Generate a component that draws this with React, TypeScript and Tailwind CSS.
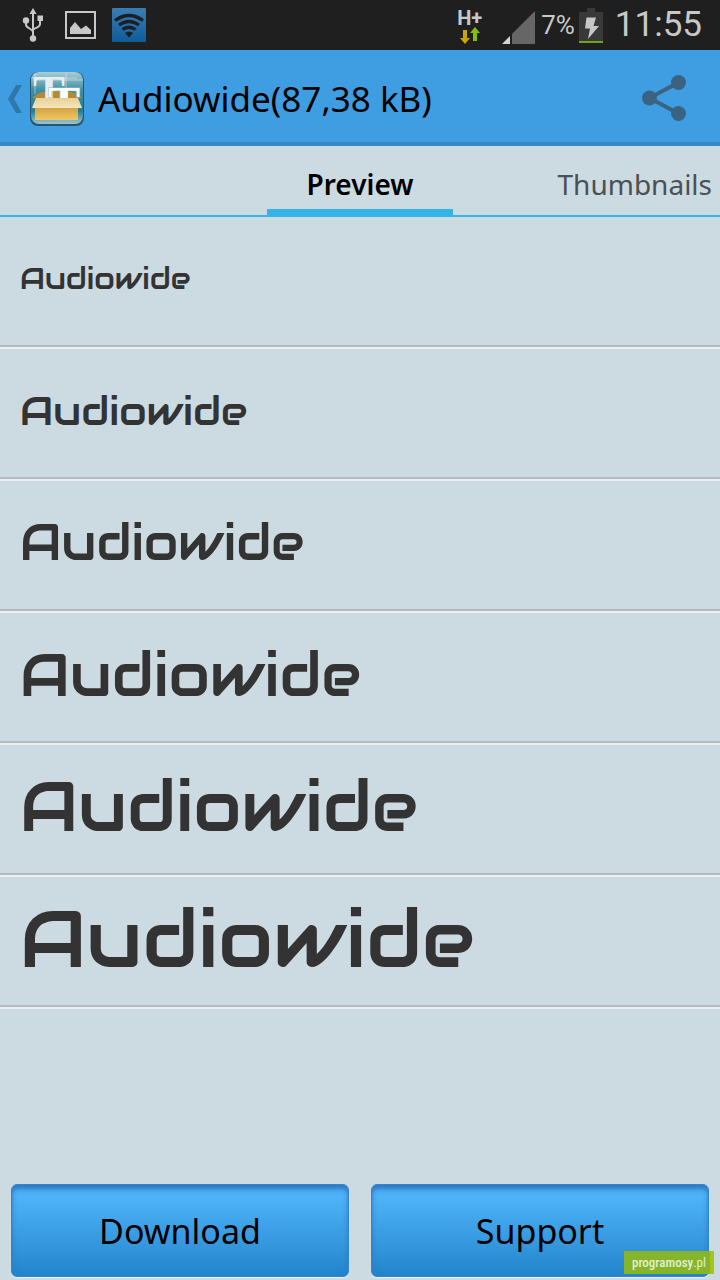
import clsx from 'clsx';

const FONT_NAME = 'Audiowide';

const previewSizes = [
  'text-[30px]',
  'text-[40px]',
  'text-[50px]',
  'text-[60px]',
  'text-[70px]',
  'text-[80px]',
];

function UsbIcon() {
  return (
    <svg width="22" height="36" viewBox="0 0 22 36" fill="none" stroke="#c8c8c8" strokeWidth="2">
      <path d="M11 5v26" />
      <path d="M4 13v5c0 3 7 4 7 7M18 11v6c0 4-7 4-7 6" />
      <path d="M11 1l3.600 6H7.400z" fill="#c8c8c8" stroke="none" />
      <circle cx="4" cy="13.500" r="3.200" fill="#c8c8c8" stroke="none" />
      <path d="M15.500 8.500h5.500v5.500h-5.500z" fill="#c8c8c8" stroke="none" />
      <circle cx="11" cy="31.500" r="3.200" fill="#c8c8c8" stroke="none" />
    </svg>
  );
}

function PictureIcon() {
  return (
    <svg width="32" height="28" viewBox="0 0 32 28">
      <path d="M2 1h29v26H2z" fill="none" stroke="#c8c8c8" strokeWidth="2" />
      <path d="M6 23v-6l5-6 6 7 5-3.500 5 4.500v4z" fill="#c8c8c8" />
    </svg>
  );
}

function WifiIcon() {
  return (
    <svg width="34" height="34" viewBox="0 0 34 34">
      <defs>
        <linearGradient id="wifi" x2="0" y2="1">
          <stop stopColor="#3a7db5" />
          <stop offset="1" stopColor="#0f5c9a" />
        </linearGradient>
      </defs>
      <rect width="34" height="34" rx="1" fill="url(#wifi)" />
      <g fill="none" stroke="#1b1f22" strokeWidth="3.200">
        <path d="M3 12.500q14-10 28 0" />
        <path d="M7 17q10-7 20 0" />
        <path d="M10.500 21.500q6.500-4.500 13 0" />
      </g>
      <path d="M13 25q4-2.600 8 0l-4 4.500z" fill="#1b1f22" />
    </svg>
  );
}

function DataArrows() {
  return (
    <svg width="22" height="17" viewBox="0 0 22 17">
      <path d="M4 3h4v8h3l-5 6-5-6h3z" fill="#cda500" />
      <path d="M14 14h4V6h3l-5-6-5 6h3z" fill="#86bd0c" />
    </svg>
  );
}

function SignalIcon() {
  return (
    <svg width="33" height="33" viewBox="0 0 33 33">
      <path d="M10 23L33 0v33H10z" fill="#666" />
      <path d="M0 33l8-8v8z" fill="#d5d5d5" />
    </svg>
  );
}

function BatteryIcon() {
  return (
    <svg width="24" height="35" viewBox="0 0 24 35">
      <path d="M8 0h8v4h8v31H0V4h8z" fill="#393939" />
      <path d="M0 33h24v2H0z" fill="#6fa516" />
      <path d="M7.500 9.500h9.500l-2.500 8.500h5.500L9 31l2-10.500H6z" fill="#c8c8c8" />
    </svg>
  );
}

function AppIcon() {
  return (
    <svg width="54" height="54" viewBox="0 0 54 54">
      <defs>
        <linearGradient id="tile" x2="0" y2="1">
          <stop stopColor="#a8cdd6" />
          <stop offset="0.350" stopColor="#3f8fa3" />
          <stop offset="0.750" stopColor="#227e94" />
          <stop offset="1" stopColor="#a0c5ce" />
        </linearGradient>
        <linearGradient id="box" x2="0" y2="1">
          <stop stopColor="#d09c3e" />
          <stop offset="1" stopColor="#edc765" />
        </linearGradient>
        <linearGradient id="flap" x2="0" y2="1">
          <stop stopColor="#e7cf9a" />
          <stop offset="1" stopColor="#f6e7bd" />
        </linearGradient>
      </defs>
      <rect width="54" height="54" rx="8" fill="#28556c" />
      <rect x="1" width="52" height="52" rx="8" fill="url(#tile)" />
      <path d="M1 6h46M5 1v21M36 1v15M3 8h50" stroke="#fff" strokeOpacity="0.450" />
      <path d="M2 26l7-5q18-5 36 0l7 5z" fill="#b98932" />
      <g fontFamily="Liberation Serif, serif" fontWeight="700" fontSize="48">
        <text x="3" y="37" fill="#e3eff2">
          T
        </text>
        <text x="18" y="48" fill="#fff" stroke="#8fbcc7" strokeWidth="1" paintOrder="stroke">
          T
        </text>
      </g>
      <path d="M5 34h43v14H5z" fill="url(#box)" />
      <path d="M6 26h42l4 10H2z" fill="url(#flap)" />
    </svg>
  );
}

function BackIcon() {
  return (
    <svg width="14" height="28" viewBox="0 0 14 28">
      <path d="M8 0h6L6 14l8 14H8L0 14z" fill="#2f76a9" />
    </svg>
  );
}

function ShareIcon() {
  return (
    <svg width="44" height="46" viewBox="0 0 44 46" fill="#3a6382">
      <path d="M36.500 7.500L7.500 23l29 15.500" fill="none" stroke="#3a6382" strokeWidth="4" />
      <circle cx="36.500" cy="7.500" r="7.500" />
      <circle cx="7.500" cy="23" r="7.500" />
      <circle cx="36.500" cy="38.500" r="7.500" />
    </svg>
  );
}

function StatusBar() {
  return (
    <div className="flex h-[50px] items-center justify-between bg-[#1f1f1f] pr-[18px] pl-[22px] font-[Roboto,sans-serif] text-[#c8c8c8]">
      <div className="flex items-center">
        <UsbIcon />
        <div className="ml-5">
          <PictureIcon />
        </div>
        <div className="ml-4">
          <WifiIcon />
        </div>
      </div>
      <div className="flex items-center">
        <div className="flex flex-col items-center gap-px pt-1">
          <span className="text-xl leading-4 font-bold">H+</span>
          <DataArrows />
        </div>
        <div className="ml-5 pt-1">
          <SignalIcon />
        </div>
        <span className="ml-1.5 text-[26px]">7%</span>
        <div className="ml-1 pt-px">
          <BatteryIcon />
        </div>
        <span className="ml-3 pb-0.5 text-[35px] leading-none">11:55</span>
      </div>
    </div>
  );
}

function ActionBar() {
  return (
    <header className="flex h-24 items-center justify-between border-b-4 border-[#3588c1] bg-[#3f9de1] pr-[34px] pl-2">
      <div className="flex items-center">
        <button type="button" aria-label="Back" className="flex items-center gap-2 pt-1.5">
          <BackIcon />
          <AppIcon />
        </button>
        <h1 className="ml-3.5 pt-1.5 text-[35px]">{FONT_NAME}(87,38 kB)</h1>
      </div>
      <button type="button" aria-label="Share" className="pt-1">
        <ShareIcon />
      </button>
    </header>
  );
}

function Tabs() {
  return (
    <nav className="grid h-[71px] grid-cols-3 border-b-2 border-[#33b5e5] text-[28px]">
      <button
        type="button"
        aria-current="page"
        className="col-start-2 -mb-0.5 w-[186px] justify-self-center border-b-8 border-[#33b5e5] pt-3 font-semibold"
      >
        Preview
      </button>
      <button type="button" className="justify-self-end pt-1.5 pr-2 text-[#4a5053]">
        Thumbnails
      </button>
    </nav>
  );
}

function PreviewList() {
  return (
    <ul className="flex-1">
      {previewSizes.map((size) => (
        <li key={size} className="border-b-2 border-[#eceff1]">
          <div className="flex h-[130px] items-center border-b-2 border-[#b5babc] px-5 pb-1">
            <span className={clsx('font-[Audiowide,sans-serif] leading-none text-[#333]', size)}>
              {FONT_NAME}
            </span>
          </div>
        </li>
      ))}
    </ul>
  );
}

function ActionButton({ label }: { label: string }) {
  return (
    <button
      type="button"
      className="h-[93px] flex-1 rounded-md border border-[#2f86cc] bg-linear-to-b from-[#4db2f8] from-15% to-[#2284cb] pt-0.5 text-[34px] shadow-[inset_0_4px_5px_#2f76bf,0_1px_1px_#eef5f9]"
    >
      {label}
    </button>
  );
}

export default function App() {
  return (
    <div className="relative flex min-h-screen flex-col bg-[#ccdae1] font-[Noto_Sans,sans-serif] text-black">
      <StatusBar />
      <ActionBar />
      <Tabs />
      <PreviewList />
      <footer className="flex gap-[22px] px-[11px] pt-3 pb-[3px]">
        <ActionButton label="Download" />
        <ActionButton label="Support" />
      </footer>
      <span className="absolute right-1.5 bottom-1.5 border-r-4 border-[#a5c51d] bg-[#86b52c] pr-1 pl-2 font-[Roboto_Condensed,Liberation_Sans_Narrow,Roboto,sans-serif] text-[13px] leading-[23px] text-[#e2efd5]">
        <b className="font-medium">programosy</b>.pl
      </span>
    </div>
  );
}
